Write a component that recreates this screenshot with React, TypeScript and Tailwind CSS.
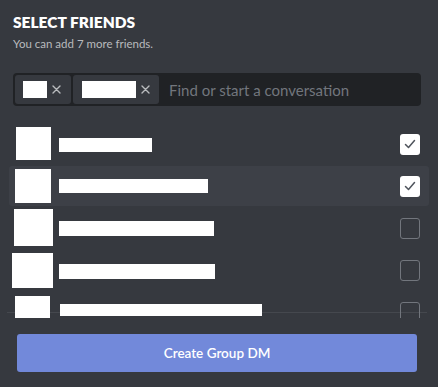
import React from "react";

const rows = [
  { al: 7, at: 3, aw: 35, ah: 33, bt: 14, bw: 93, bh: 14, bl: 0, checked: true, hl: false },
  { al: 6, at: 3, aw: 36, ah: 34, bt: 13, bw: 149, bh: 14, bl: 0, checked: true, hl: true },
  { al: 5, at: 1, aw: 39, ah: 37, bt: 13, bw: 155, bh: 15, bl: 0, checked: false, hl: false },
  { al: 3, at: 3, aw: 41, ah: 35, bt: 14, bw: 156, bh: 15, bl: 0, checked: false, hl: false },
  { al: 6, at: 4, aw: 35, ah: 33, bt: 12, bw: 202, bh: 12, bl: 1, checked: false, hl: false },
];

const Cross = () => (
  <svg width="9" height="9" viewBox="0 0 9 9" className="shrink-0">
    <path d="M1 1L8 8M8 1L1 8" stroke="#b9bbbe" strokeWidth="1.4" strokeLinecap="round" />
  </svg>
);

export default function App() {
  return (
    <div
      className="w-[438px] h-[387px] bg-[#36393f] flex flex-col overflow-hidden"
      style={{ fontFamily: 'Lato, "Open Sans", sans-serif' }}
    >
      <div className="px-[13px] pt-[12px]">
        <div className="text-[15.5px] leading-[20px] font-extrabold text-white uppercase">Select Friends</div>
        <div className="mt-[4px] text-[11.5px] leading-[16px] text-[#b9bbbe]">You can add 7 more friends.</div>
      </div>

      <div className="mx-[13px] mt-[21px] w-[408px] h-[33px] rounded-[4px] bg-[#202225] flex items-center pl-[2px]">
        <div className="h-[29px] rounded-[3px] bg-[#36393f] flex items-center pl-[8px] pr-[10px] gap-[5px]">
          <div className="w-[24px] h-[17px] bg-white" />
          <Cross />
        </div>
        <div className="ml-[2px] h-[29px] rounded-[3px] bg-[#36393f] flex items-center pl-[9px] pr-[9px] gap-[5px]">
          <div className="w-[54px] h-[17px] bg-white" />
          <Cross />
        </div>
        <div className="ml-[10px] text-[15px] text-[#72767d] leading-[20px]">Find or start a conversation</div>
      </div>

      <div className="relative mt-[18px] h-[194px] overflow-hidden">
        <div className="absolute left-[7px] right-[11px] top-[188px] h-px bg-[#45484e]" />
        <div className="relative flex flex-col gap-[2px] px-[9px]">
          {rows.map((r, i) => (
            <div
              key={i}
              className={`h-[40px] flex items-start rounded-[3px] pr-[9px] ${r.hl ? "bg-[#3d4047]" : ""}`}
            >
              <div className="w-[50px] shrink-0">
                <div
                  className="bg-white"
                  style={{ marginLeft: r.al, marginTop: r.at, width: r.aw, height: r.ah }}
                />
              </div>
              <div
                className="bg-white"
                style={{ marginLeft: r.bl, marginTop: r.bt, width: r.bw, height: r.bh }}
              />
              <div className="flex-1" />
              {r.checked ? (
                <div className="self-center w-[20px] h-[21px] rounded-[3px] bg-white flex items-center justify-center">
                  <svg width="14" height="14" viewBox="0 0 14 14">
                    <path d="M2.5 7.5L5.5 10.5L11.5 3.5" fill="none" stroke="#4f545c" strokeWidth="1.5" strokeLinecap="round" strokeLinejoin="round" />
                  </svg>
                </div>
              ) : (
                <div className="self-center w-[20px] h-[21px] rounded-[3px] border-[1.5px] border-[#72767d]" />
              )}
            </div>
          ))}
        </div>
      </div>

      <button className="mx-[17px] mt-[16px] w-[400px] h-[38px] rounded-[3px] bg-[#7289da] text-white text-[13.5px] font-semibold flex items-center justify-center">
        Create Group DM
      </button>
    </div>
  );
}
